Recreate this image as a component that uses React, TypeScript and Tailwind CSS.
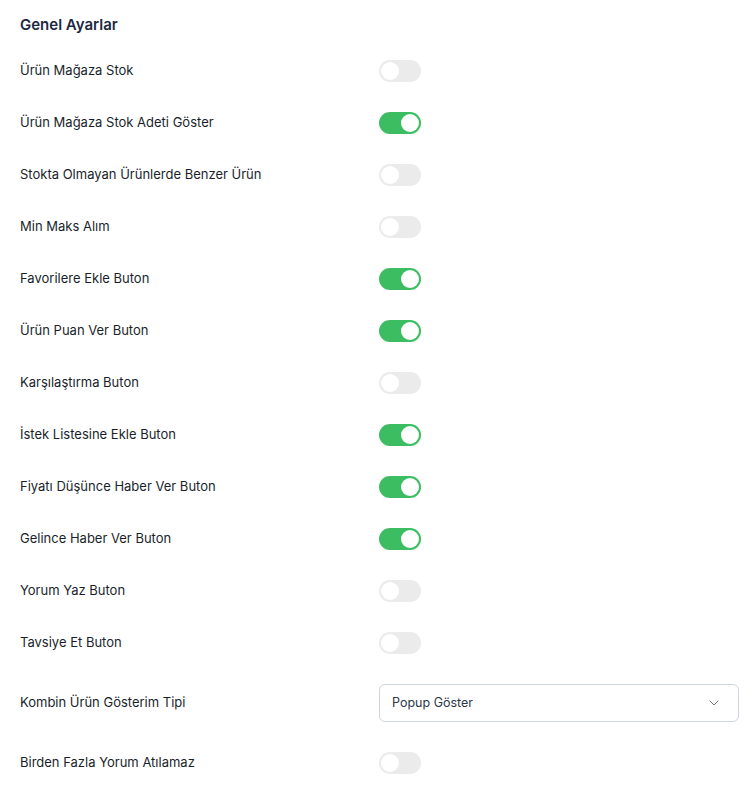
import { ChevronDown } from "lucide-react";

const settings: { label: string; on?: boolean; select?: string }[] = [
    { label: "Ürün Mağaza Stok", on: false },
    { label: "Ürün Mağaza Stok Adeti Göster", on: true },
    { label: "Stokta Olmayan Ürünlerde Benzer Ürün", on: false },
    { label: "Min Maks Alım", on: false },
    { label: "Favorilere Ekle Buton", on: true },
    { label: "Ürün Puan Ver Buton", on: true },
    { label: "Karşılaştırma Buton", on: false },
    { label: "İstek Listesine Ekle Buton", on: true },
    { label: "Fiyatı Düşünce Haber Ver Buton", on: true },
    { label: "Gelince Haber Ver Buton", on: true },
    { label: "Yorum Yaz Buton", on: false },
    { label: "Tavsiye Et Buton", on: false },
    { label: "Kombin Ürün Gösterim Tipi", select: "Popup Göster" },
    { label: "Birden Fazla Yorum Atılamaz", on: false },
];

function Toggle({ on }: { on: boolean }) {
    return (
        <div
            className={`w-[42px] h-[22px] rounded-full p-[2px] flex ${on ? "bg-[#3dbd62] justify-end" : "bg-[#ebebeb] justify-start"}`}
        >
            <div className="w-[18px] h-[18px] rounded-full bg-white" />
        </div>
    );
}

export default function App() {
    return (
        <div className="min-h-screen bg-white pl-5 pr-4 pt-[15px] font-['Inter',sans-serif]">
            <h2 className="text-[15px] leading-5 font-semibold text-[#1c2942] mb-[10px]">Genel Ayarlar</h2>

            <div className="flex flex-col">
                {settings.map((s) => (
                    <div key={s.label} className="grid grid-cols-[359px_1fr] items-center py-[15px]">
                        <span className="text-[13px] text-[#1a1f2b]">{s.label}</span>
                        {s.select ? (
                            <div className="h-[38px] border border-[#cfd6e0] rounded-md flex items-center justify-between pl-3 pr-4">
                                <span className="text-[12.5px] text-[#2c3648]">{s.select}</span>
                                <ChevronDown className="w-4 h-4 text-[#6b7280]" strokeWidth={1.5} />
                            </div>
                        ) : (
                            <Toggle on={!!s.on} />
                        )}
                    </div>
                ))}
            </div>
        </div>
    );
}
